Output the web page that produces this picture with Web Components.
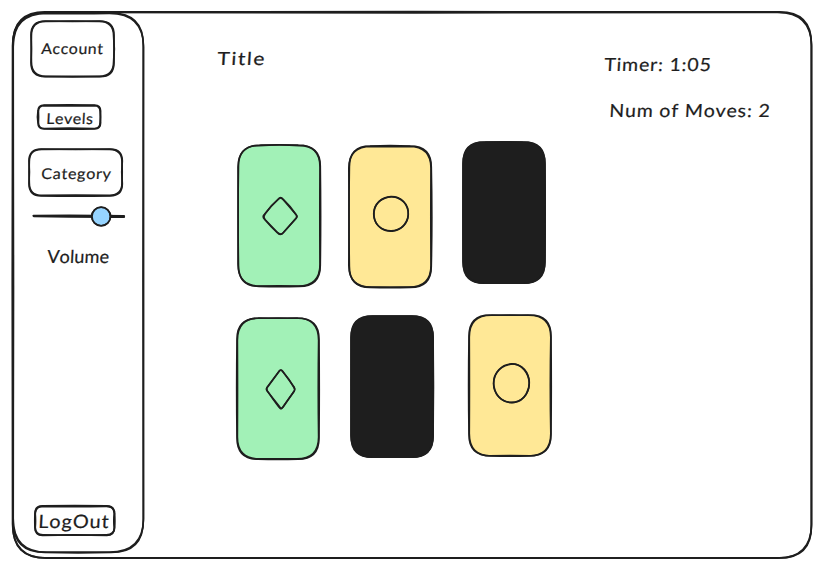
<!DOCTYPE html>
<html lang="en">
<head>
<meta charset="utf-8">
<title>Memory game</title>
<style>
html,body{margin:0;background:#fff;width:827px;height:577px;overflow:hidden}
</style>
</head>
<body>
<memory-app></memory-app>
<script>
const INK = '#1e1e1e';
const nums = (s, n) => s ? s.split(/[ ,]+/).map(Number) : Array(n).fill(0);

/* Rounded outline; e = edge offsets at the corners, m = bow at the middle of each edge (top,right,bottom,left). */
function outline(w, h, r, e, m) {
  const [t, ri, b, l] = e, [mt, mr, mb, ml] = m.map(v => v * .7);
  return `M${r} ${t}Q${w/2} ${t+mt*2} ${w-r} ${t}Q${w+ri} ${t} ${w+ri} ${r}` +
    `Q${w+ri+mr*2} ${h/2} ${w+ri} ${h-r}Q${w+ri} ${h+b} ${w-r} ${h+b}` +
    `Q${w/2} ${h+b+mb*2} ${r} ${h+b}Q${l} ${h+b} ${l} ${h-r}` +
    `Q${l+ml*2} ${h/2} ${l} ${r}Q${l} ${t} ${r} ${t}Z`;
}

class SketchBox extends HTMLElement {
  connectedCallback() {
    const w = +this.getAttribute('w'), h = +this.getAttribute('h'), r = +this.getAttribute('r');
    const fill = this.getAttribute('fill') || 'none';
    const e1 = nums(this.getAttribute('e1'), 4), m1 = nums(this.getAttribute('m1'), 4);
    const e2 = nums(this.getAttribute('e2'), 4), m2 = nums(this.getAttribute('m2'), 4);
    const sw = this.getAttribute('stroke') || 1.6;
    this.attachShadow({mode:'open'}).innerHTML = `<style>
      :host{display:block;position:relative;z-index:0;box-sizing:border-box;width:${w}px;height:${h}px;flex:none}
      svg{position:absolute;left:0;top:0;overflow:visible;z-index:-1}
    </style><svg width="${w}" height="${h}" fill="none" stroke="${INK}" stroke-width="${sw}" stroke-linejoin="round">
      <path fill="${fill}" d="${outline(w,h,r,e1,m1)}"/><path d="${outline(w,h,r*1.06,e2,m2)}"/></svg><slot></slot>`;
  }
}
customElements.define('sketch-box', SketchBox);

/* Handwritten-style label: glyphs are widened and spaced to fill the given width. */
class SketchLabel extends HTMLElement {
  connectedCallback() {
    const w = +this.getAttribute('w'), size = this.getAttribute('size') || 18;
    this.attachShadow({mode:'open'}).innerHTML = `<style>
      :host{display:block;width:${w}px;height:20px;flex:none}
      span{display:inline-block;white-space:pre;font:${size}px/20px Excalifont,Lato,sans-serif;color:${INK};
        -webkit-text-stroke:.2px ${INK};font-kerning:none;transform-origin:0 80%}
    </style><span><slot></slot></span>`;
    const span = this.shadowRoot.querySelector('span');
    const n = this.textContent.length;
    const natural = span.getBoundingClientRect().width;
    const scale = Math.sqrt(w / natural);
    span.style.letterSpacing = ((w / scale - natural) / (n - .5)) + 'px';
    span.style.transform = `scaleX(${scale}) skewX(-3deg)`;
  }
}
customElements.define('sketch-label', SketchLabel);

class VolumeSlider extends HTMLElement {
  connectedCallback() {
    this.attachShadow({mode:'open'}).innerHTML = `<style>:host{display:block;width:92px;height:20px}svg{display:block;overflow:visible}</style>
    <svg width="92" height="20" fill="none" stroke="${INK}" stroke-linecap="round">
      <path stroke-width="2.2" d="M.5 9.8Q45 9.4 91 10M1 10.2Q44 11 91 10.8"/>
      <path stroke-width="1.2" d="M1 10H60M78 9.4L91.5 11"/>
      <ellipse cx="68.2" cy="10.5" rx="9.3" ry="9.3" fill="#96d4ff" stroke-width="1.8"/>
      <ellipse cx="68" cy="10.4" rx="9.4" ry="9.2" stroke-width="1.4"/>
    </svg>`;
  }
}
customElements.define('volume-slider', VolumeSlider);

const SYMBOLS = {
  diamondWide: `<path d="M15.4 2.2Q17.7-.9 20 2.2Q28 9.8 33 17.5Q35.2 19.7 33 21.5L20.3 35.8Q17 39.1 14.5 35.8Q8.5 30.5 1.5 22.2Q-1.2 19.5 1.5 17.4Q7 10 15.4 2.2Z"/><path d="M16 1.5Q18 0 20.5 3L32.5 17Q35 19.8 32 22.4L19.5 36.5Q17 38 14 35L2 22.5Q0 20 2 16.8Q8 8 16 1.5Z"/>`,
  diamondNarrow: `<path d="M13.6 1.5Q15 .1 16.7 2.2L28.2 18.2Q29.5 20.5 28.2 22.3Q23 29.5 17 38.2Q15 41.6 13 38.2Q7 30.5 1.5 22.1Q-.2 20 1.5 17.6Z"/><path d="M13.2 2.3Q15 0 17 3Q24 10.8 27.7 18.1Q29.8 20.8 27.3 23.2L16.5 38.5Q14.8 40 13.2 37.2L1 21.8Q-.3 19.8 1.5 18.2Q7.5 10 13.2 2.3Z"/>`,
  circle: `<path d="M18 .6C28.3.4 35.4 8.7 35.3 18.2C35 28.5 27.4 34.8 17.8 34.7C7.7 34.6.8 27.8.7 18C.6 8 8.7.8 18 .6Z"/><path d="M15 1.2C24.5-.7 34.2 5.1 35.2 15.5C36.2 25.6 28.8 34 19.5 35.1C9.9 36 1.8 29.5 1 19.8C.2 9.3 6.7 3 15 1.2Z"/>`,
  oval: `<path d="M18.5.9C28.5.7 36.1 9.8 36.2 20.5C36 31.5 28.7 39.2 18.5 39.4C8.4 39.5.7 31.3.5 20.6C.4 9.9 8.7 1.1 18.5.9Z"/><path d="M15.5 1.7C25-1.2 34 5.5 36 16C37.7 27.1 31.4 37.7 21.4 39.5C11.4 40.8 2.6 34 .9 22.8C-.3 11.9 6.3 4 15.5 1.7Z"/>`
};
class CardSymbol extends HTMLElement {
  connectedCallback() {
    const w = this.getAttribute('w'), h = this.getAttribute('h');
    this.attachShadow({mode:'open'}).innerHTML = `<style>:host{display:block;width:${w}px;height:${h}px}svg{display:block;overflow:visible}</style>
      <svg width="${w}" height="${h}" fill="none" stroke="${INK}" stroke-width="1.6">${SYMBOLS[this.getAttribute('kind')]}</svg>`;
  }
}
customElements.define('card-symbol', CardSymbol);

class MemoryApp extends HTMLElement {
  connectedCallback() {
    this.attachShadow({mode:'open'}).innerHTML = `<style>
      :host{display:block;box-sizing:border-box;width:827px;height:577px;padding:12.2px 0 0 12.5px}
      .frame{display:flex}
      .side{display:flex;flex-direction:column;padding:7.4px 0 0;margin:1px 0 0 .4px}
      .account{margin-left:18.2px;padding:17.4px 0 0 10px}
      .levels{margin:29.2px 0 0 24.8px;padding:2.2px 0 0 8.6px}
      .category{margin:20px 0 0 15.8px;padding:13.6px 0 0 12px}
      volume-slider{margin:10px 0 0 20.4px}
      .volume{margin:19.6px 0 0 34px}
      .logout{margin:240.7px 0 0 22.3px;padding:4.4px 0 0 2.6px}
      .main{flex:1;min-width:0;display:grid;grid-template-columns:409px 1fr;grid-template-rows:116px 1fr;align-items:start}
      .title{margin:36px 0 0 74px}
      .stats{display:grid;gap:25.5px;padding-top:42.3px}
      .timer{margin-left:52px}
      .moves{margin-left:57px}
      .cards{grid-column:1/3;display:grid;grid-template-columns:111px 116px 84px;grid-template-rows:174px 143px;padding:12.7px 0 0 94.6px}
    </style>
    <sketch-box w="798.4" h="545.9" r="32" stroke="1.8" e1="0 0 0 0" e2=".3 .1 .2 -.4" m1="-.4 -.3 .3 .3" m2=".8 .4 -.4 -.3">
     <div class="frame">
      <sketch-box class="side" w="130.3" h="539.5" r="32" stroke="1.7" e1="0 0 0 0" e2=".3 .2 -.3 .2" m1="-.5 -.4 .7 -.4" m2=".4 .1 0 .3">
        <sketch-box class="account" w="83" h="55.7" r="14" stroke="1.7" e1="0 0 0 0" e2=".3 -.4 -.3 .4" m1=".6 0 -.4 .6" m2="-.3 1 .6 -.2"><sketch-label w="62" size="15">Account</sketch-label></sketch-box>
        <sketch-box class="levels" w="62.6" h="23.8" r="6" stroke="1.7" e1="0 0 0 0" e2=".6 -.5 -.3 .4" m1="-.2 -.3 .4 -.7" m2=".5 .6 -.4 .2"><sketch-label w="47" size="15">Levels</sketch-label></sketch-box>
        <sketch-box class="category" w="93.3" h="46.8" r="12" stroke="1.7" e1="0 0 0 0" e2=".3 -.3 -.4 .3" m1=".7 -.8 .5 .6" m2="-.3 .3 -.4 -.4"><sketch-label w="70" size="15">Category</sketch-label></sketch-box>
        <volume-slider></volume-slider>
        <sketch-label class="volume" w="62">Volume</sketch-label>
        <sketch-box class="logout" w="79.3" h="29.3" r="7.5" stroke="1.8" e1="0 0 0 0" e2=".4 .3 -.4 .2" m1="-.5 -.6 -.5 -.2" m2=".3 .3 .4 .4"><sketch-label w="71" size="18.5">LogOut</sketch-label></sketch-box>
      </sketch-box>
      <div class="main">
        <sketch-label class="title" w="48">Title</sketch-label>
        <div class="stats">
          <sketch-label class="timer" w="107">Timer: 1:05</sketch-label>
          <sketch-label class="moves" w="161">Num of Moves: 2</sketch-label>
        </div>
        <div class="cards">
          <sketch-box style="margin:4px 0 0;padding:52.2px 0 0 25px" w="82.3" h="141.4" r="21" fill="#a2f1b7" stroke="1.6" e1=".6 0 0 .5" e2="0 -.3 -.3 0" m1="-.9 .5 .3 -.6" m2="-.3 -.3 -.3 .2"><card-symbol kind="diamondWide" w="35" h="38"></card-symbol></sketch-box>
          <sketch-box style="margin:4.7px 0 0;padding:50px 0 0 24.2px" w="82.3" h="141.4" r="21" fill="#ffe896" stroke="1.6" e1="0 0 0 .4" e2=".4 -.3 -.3 -.2" m1="-.6 .8 .5 -.6" m2=".4 -.3 -.2 .3"><card-symbol kind="circle" w="36" h="36"></card-symbol></sketch-box>
          <sketch-box style="margin:1px 0 0 -1.3px" w="82" h="141.2" r="21" fill="#1e1e1e" stroke="1.5" m1="0 .3 .2 -.2" m2="-.3 .3 0 0"></sketch-box>
          <sketch-box style="margin:3px 0 0 -1px;padding:50.7px 0 0 29.6px" w="82" h="141.2" r="21" fill="#a2f1b7" stroke="1.6" e1=".3 0 0 0" e2="0 -.4 -.3 .4" m1="-.5 .4 .4 -.5" m2=".4 -.5 -.3 .2"><card-symbol kind="diamondNarrow" w="30" h="40"></card-symbol></sketch-box>
          <sketch-box style="margin:1.1px 0 0 2px" w="82.2" h="141.2" r="21" fill="#1e1e1e" stroke="1.5" m1="-.1 .4 .1 -.1" m2="0 .2 0 .1"></sketch-box>
          <sketch-box style="margin:.4px 0 0 4.6px;padding:47.5px 0 0 23.4px" w="82" h="140.8" r="21" fill="#ffe896" stroke="1.6" e1="0 0 0 0" e2=".3 -.2 .2 .3" m1=".4 .4 -.3 -.6" m2="-.3 -.7 .4 .2"><card-symbol kind="oval" w="37" h="40"></card-symbol></sketch-box>
        </div>
      </div>
     </div>
    </sketch-box>`;
  }
}
customElements.define('memory-app', MemoryApp);
</script>
</body>
</html>
